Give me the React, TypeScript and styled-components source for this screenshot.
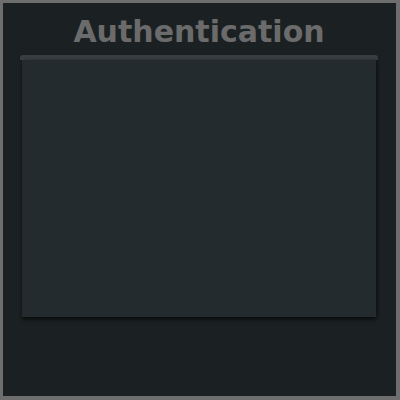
import styled, { createGlobalStyle } from "styled-components";

const GlobalStyle = createGlobalStyle`
  html, body {
    margin: 0;
    padding: 0;
    background: #1b2123;
  }
`;

const Frame = styled.div`
  box-sizing: border-box;
  width: 400px;
  height: 400px;
  border-style: solid;
  border-color: #6e6e6e;
  border-width: 3px 4px 4px 3px;
  background: #1b2123;
  display: flex;
  flex-direction: column;
  padding: 0 18px 0 17px;
`;

const Title = styled.h1`
  margin: 0;
  height: 52px;
  display: flex;
  align-items: center;
  justify-content: center;
  padding-top: 5px;
  box-sizing: border-box;
  font-family: "DejaVu Sans", sans-serif;
  font-weight: bold;
  font-size: 30px;
  color: #6b6b6b;
  letter-spacing: 0;
`;

const Panel = styled.div`
  display: flex;
  flex-direction: column;
  height: 262px;
`;

const Lip = styled.div`
  height: 5px;
  background: #393f41;
  border-radius: 3px 3px 0 0;
  box-shadow: 0 1px 2px rgba(0, 0, 0, 0.3);
`;

const Body = styled.div`
  flex: 1;
  margin: 0 2px;
  background: #232b2e;
  box-shadow: 0 3px 3px #0c1011, 2px 0 3px rgba(0, 0, 0, 0.3);
`;

const App = (): JSX.Element => {
  return (
    <>
      <GlobalStyle />
      <Frame>
        <Title>Authentication</Title>
        <Panel>
          <Lip />
          <Body />
        </Panel>
      </Frame>
    </>
  );
};

export default App;
